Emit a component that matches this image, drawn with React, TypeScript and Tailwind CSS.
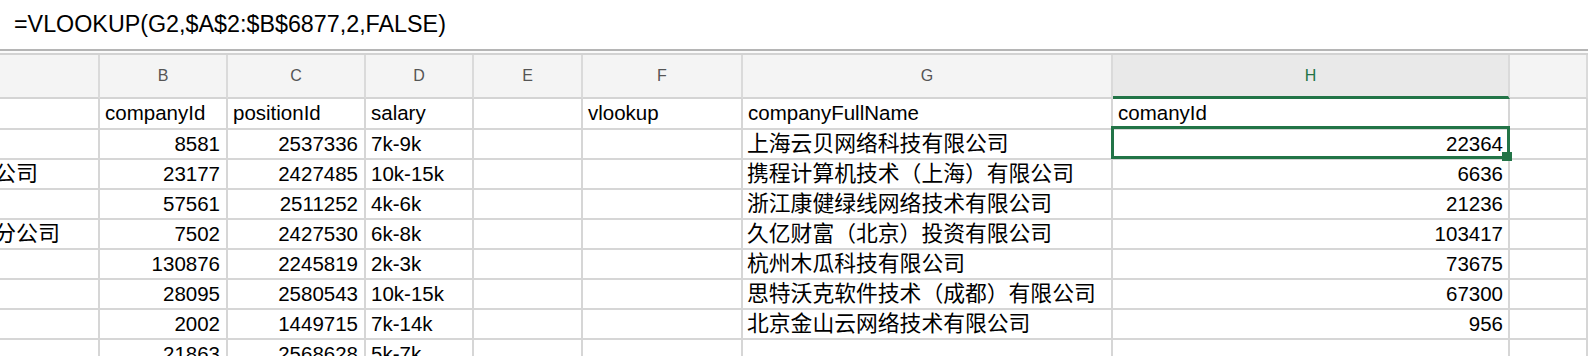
import React from 'react'

// column widths, the 2px right gridline included
const widths = ['w-[100px]', 'w-[128px]', 'w-[138px]', 'w-[108px]', 'w-[109px]', 'w-[160px]', 'w-[370px]', 'w-[397px]', 'w-[78px]']
const letters = ['', 'B', 'C', 'D', 'E', 'F', 'G', 'H', '']

type Row = {
  a?: string
  aPad?: string
  b?: string
  c?: string
  d?: string
  f?: string
  g?: string
  h?: string
}

const titles = ['', 'companyId', 'positionId', 'salary', '', 'vlookup', 'companyFullName', 'comanyId', '']

const rows: Row[] = [
  { b: '8581', c: '2537336', d: '7k-9k', g: '上海云贝网络科技有限公司', h: '22364' },
  { a: '公司', aPad: 'pr-[60px]', b: '23177', c: '2427485', d: '10k-15k', g: '携程计算机技术（上海）有限公司', h: '6636' },
  { b: '57561', c: '2511252', d: '4k-6k', g: '浙江康健绿线网络技术有限公司', h: '21236' },
  { a: '分公司', aPad: 'pr-[38px]', b: '7502', c: '2427530', d: '6k-8k', g: '久亿财富（北京）投资有限公司', h: '103417' },
  { b: '130876', c: '2245819', d: '2k-3k', g: '杭州木瓜科技有限公司', h: '73675' },
  { b: '28095', c: '2580543', d: '10k-15k', g: '思特沃克软件技术（成都）有限公司', h: '67300' },
  { b: '2002', c: '1449715', d: '7k-14k', g: '北京金山云网络技术有限公司', h: '956' },
  { b: '21863', c: '2568628', d: '5k-7k' },
]

const cellBase = 'shrink-0 h-full flex items-center whitespace-nowrap border-r-2 border-b-2 border-[#d6d6d6] leading-none'

export default function App() {
  return (
    <div
      className="w-[1588px] h-[356px] overflow-hidden bg-white text-black"
      style={{ fontFamily: "'Liberation Sans', 'Noto Sans CJK SC', sans-serif" }}
    >
      {/* Formula bar */}
      <div className="h-[49px] flex items-center pl-[14px] text-[23.3px] leading-none">
        =VLOOKUP(G2,$A$2:$B$6877,2,FALSE)
      </div>
      <div className="h-[2px] bg-[#b5b5b5]" />
      <div className="h-[2px] bg-[#fafafa]" />
      <div className="h-[2px] bg-[#d2d2d2]" />

      {/* Column letters */}
      <div className="flex h-[44px] bg-[#f4f4f4]">
        {letters.map((l, i) => (
          <div
            key={i}
            className={
              i === 7
                ? `${widths[i]} shrink-0 h-full flex items-center justify-center border-r-2 border-r-[#dadada] border-b-[3px] border-b-[#227447] bg-[#e9e9e9] text-[16px] text-[#227447]`
                : `${widths[i]} shrink-0 h-full flex items-center justify-center border-r-2 border-r-[#dadada] border-b-2 border-b-[#d4d4d4] text-[16px] text-[#555555]`
            }
          >
            {l}
          </div>
        ))}
      </div>

      {/* Titles row */}
      <div className="flex h-[31px] text-[20.5px]">
        {titles.map((t, i) => (
          <div key={i} className={`${widths[i]} ${cellBase} pl-[5px]`}>
            {t}
          </div>
        ))}
      </div>

      {/* Data rows */}
      {rows.map((r, ri) => (
        <div key={ri} className="flex h-[30px] text-[20.5px]">
          <div className={`${widths[0]} ${cellBase} justify-end text-[22px] ${r.aPad ?? ''}`}>{r.a}</div>
          <div className={`${widths[1]} ${cellBase} justify-end pr-[6px]`}>{r.b}</div>
          <div className={`${widths[2]} ${cellBase} justify-end pr-[6px]`}>{r.c}</div>
          <div className={`${widths[3]} ${cellBase} pl-[5px]`}>{r.d}</div>
          <div className={`${widths[4]} ${cellBase}`} />
          <div className={`${widths[5]} ${cellBase}`} />
          <div className={`${widths[6]} ${cellBase} pl-[4px] text-[21.8px]`}>{r.g}</div>
          <div className={`${widths[7]} ${cellBase} justify-end pr-[5px] relative`}>
            {r.h}
            {ri === 0 && (
              <>
                <div className="absolute -left-[2px] -top-[4px] -right-[2px] -bottom-[1px] border-[3px] border-[#227447] z-10" />
                <div className="absolute -right-[4px] -bottom-[3px] w-[10px] h-[9px] bg-[#227447] z-20" />
              </>
            )}
          </div>
          <div className={`${widths[8]} ${cellBase}`} />
        </div>
      ))}
    </div>
  )
}
